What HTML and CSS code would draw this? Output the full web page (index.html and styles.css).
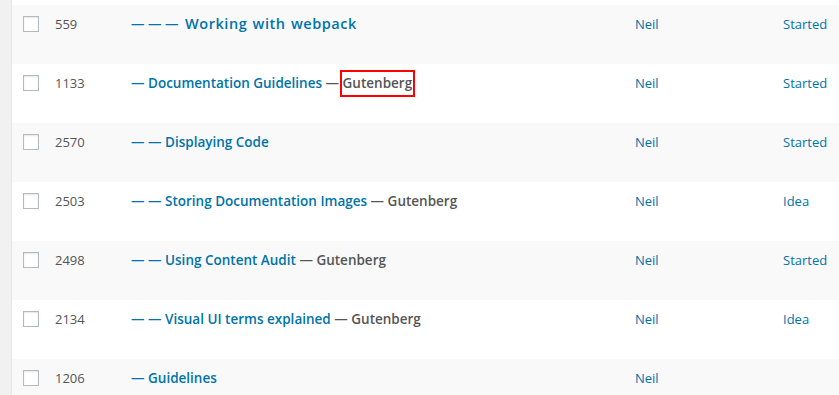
FILE: index.html
```html
<!DOCTYPE html>
<html lang="en">
<head>
<meta charset="utf-8">
<title>Posts</title>
<link rel="stylesheet" href="styles.css">
</head>
<body>
<div class="wrap">
  <div class="list">
    <div class="row alt">
      <div class="cb"><span class="box"></span></div>
      <div class="id">559</div>
      <div class="title"><a class="link">— — — <span class="wide">Working with webpack</span></a></div>
      <div class="author"><a class="link-plain">Neil</a></div>
      <div class="status"><a class="link-plain">Started</a></div>
    </div>
    <div class="row">
      <div class="cb"><span class="box"></span></div>
      <div class="id">1133</div>
      <div class="title"><a class="link">— Documentation Guidelines</a> <span class="parent">— <span class="hl">Gutenberg</span></span></div>
      <div class="author"><a class="link-plain">Neil</a></div>
      <div class="status"><a class="link-plain">Started</a></div>
    </div>
    <div class="row alt">
      <div class="cb"><span class="box"></span></div>
      <div class="id">2570</div>
      <div class="title"><a class="link">— — Displaying Code</a></div>
      <div class="author"><a class="link-plain">Neil</a></div>
      <div class="status"><a class="link-plain">Started</a></div>
    </div>
    <div class="row">
      <div class="cb"><span class="box"></span></div>
      <div class="id">2503</div>
      <div class="title"><a class="link">— — Storing Documentation Images</a> <span class="parent">— Gutenberg</span></div>
      <div class="author"><a class="link-plain">Neil</a></div>
      <div class="status"><a class="link-plain">Idea</a></div>
    </div>
    <div class="row alt">
      <div class="cb"><span class="box"></span></div>
      <div class="id">2498</div>
      <div class="title"><a class="link">— — Using Content Audit</a> <span class="parent">— Gutenberg</span></div>
      <div class="author"><a class="link-plain">Neil</a></div>
      <div class="status"><a class="link-plain">Started</a></div>
    </div>
    <div class="row">
      <div class="cb"><span class="box"></span></div>
      <div class="id">2134</div>
      <div class="title"><a class="link">— — Visual UI terms explained</a> <span class="parent">— Gutenberg</span></div>
      <div class="author"><a class="link-plain">Neil</a></div>
      <div class="status"><a class="link-plain">Idea</a></div>
    </div>
    <div class="row alt">
      <div class="cb"><span class="box"></span></div>
      <div class="id">1206</div>
      <div class="title"><a class="link">— Guidelines</a></div>
      <div class="author"><a class="link-plain">Neil</a></div>
      <div class="status"></div>
    </div>
  </div>
</div>
</body>
</html>
```

FILE: styles.css
```css
html, body {
  margin: 0;
  padding: 0;
}
body {
  background: #f1f1f1;
  font-family: "Open Sans", "Noto Sans", "Liberation Sans", sans-serif;
  font-size: 13px;
  color: #555;
  overflow: hidden;
  height: 395px;
}
.wrap {
  margin-left: 11px;
  border-left: 1px solid #e5e5e5;
  background: #fff;
  padding-top: 5px;
  height: 390px;
  overflow: hidden;
}
.list {
  display: flex;
  flex-direction: column;
}
.row {
  display: grid;
  grid-template-columns: 43px 76px 504px 148px 1fr;
  height: 59px;
  flex: 0 0 59px;
  background: #fff;
}
.row.alt {
  background: #f9f9f9;
}
.cb {
  padding: 11px 0 0 11px;
}
.box {
  display: block;
  width: 16px;
  height: 16px;
  box-sizing: border-box;
  border: 1px solid #b4b9be;
  background: #fff;
  box-shadow: inset 0 1px 2px rgba(0,0,0,0.1);
}
.id, .title, .author, .status {
  padding-top: 9px;
  line-height: 20px;
}
.title {
  font-size: 13.5px;
  font-weight: 600;
  white-space: nowrap;
}
.link {
  color: #0073aa;
}
.wide {
  font-size: 14.5px;
  letter-spacing: 0.55px;
  word-spacing: 1px;
  margin-left: 3px;
}
.parent {
  color: #555;
}
.hl {
  border: 2px solid #f00;
  padding: 2px 1px 3px;
  margin-left: -3px;
}
.link-plain {
  color: #0073aa;
}
```
